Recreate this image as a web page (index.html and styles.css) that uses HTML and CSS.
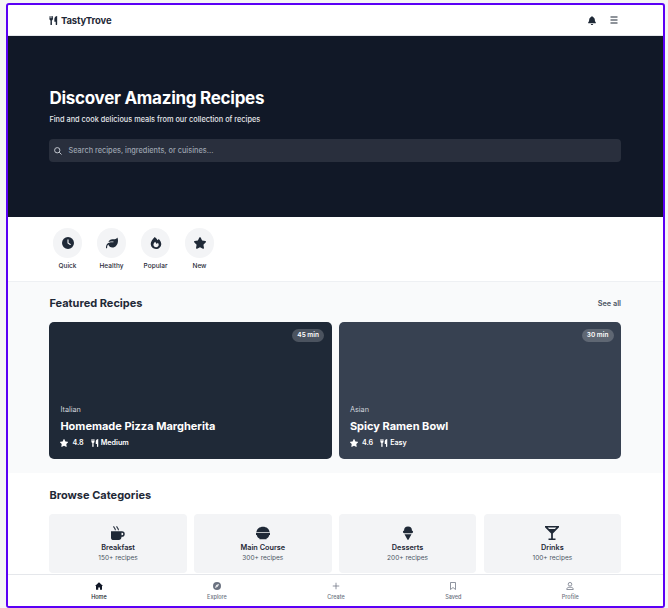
FILE: index.html
```html
<!DOCTYPE html>
<html lang="en">
<head>
<meta charset="utf-8">
<title>TastyTrove</title>
<link rel="stylesheet" href="styles.css">
</head>
<body>
<svg class="sprite" aria-hidden="true">
  <symbol id="utensils" viewBox="0 0 16 16"><path d="M1.200 0h1.100l.4 4h.6V0h1.200v4h.6l.4-4h1.100l.5 5c0 1.500-.8 2.500-2 2.900l.2 7.100c0 1.300-2.800 1.300-2.800 0L2.700 7.900C1.500 7.500.7 6.500.7 5zM14.500 0v15c0 1.300-2.600 1.300-2.600 0v-5H9.500V5.500C9.500 2.500 11.500 0 14.500 0z"/></symbol>
  <symbol id="star" viewBox="24 0 528 512"><path d="M316.900 18C311.600 7 300.400 0 288.100 0s-23.400 7-28.800 18L195 150.300 51.400 171.500c-12 1.800-22 10.200-25.700 21.700s-.7 24.200 7.900 32.700L137.800 329 113.200 474.700c-2 12 3 24.200 12.900 31.300s23 8 33.800 2.300l128.300-68.500 128.300 68.500c10.800 5.700 23.900 4.900 33.800-2.300s14.900-19.300 12.900-31.300L438.500 329 542.700 225.900c8.600-8.500 11.700-21.200 7.900-32.700s-13.700-19.900-25.700-21.700L381.200 150.300z"/></symbol>
</svg>
<div class="frame">
  <header class="header">
    <div class="brand"><svg class="i-brand"><use href="#utensils"/></svg><span>TastyTrove</span></div>
    <div class="actions">
      <svg class="i-bell" viewBox="0 0 448 512"><path d="M224 0c-17.700 0-32 14.300-32 32V51.200C119 66 64 130.600 64 208v18.800c0 47-17.300 92.400-48.500 127.600l-7.400 8.300c-8.400 9.400-10.400 22.900-5.300 34.400S19.400 416 32 416H416c12.600 0 24-7.400 29.200-18.900s3.100-25-5.300-34.400l-7.400-8.300C401.300 319.200 384 273.900 384 226.800V208c0-77.400-55-142-128-156.800V32c0-17.700-14.300-32-32-32zM160 448c0 36 28 64 64 64s64-28 64-64z"/></svg>
      <svg class="i-menu" viewBox="0 0 8 8"><path d="M.5 1h7M.5 4h7M.5 7h7"/></svg>
    </div>
  </header>
  <section class="hero">
    <h1>Discover Amazing Recipes</h1>
    <p>Find and cook delicious meals from our collection of recipes</p>
    <div class="search"><svg class="i-search" viewBox="0 0 16 16"><circle cx="6.500" cy="6.500" r="5.300"/><path d="M10.500 10.500 15 15"/></svg><span>Search recipes, ingredients, or cuisines...</span></div>
  </section>
  <section class="quick">
    <div class="quick-item"><div class="disc"><svg viewBox="0 0 512 512"><path fill-rule="evenodd" d="M256 0a256 256 0 1 1 0 512A256 256 0 1 1 256 0zM232 120V256c0 8 4 15.500 10.700 20l96 64c11 7.400 25.900 4.400 33.300-6.700s4.400-25.900-6.700-33.300L280 243.200V120c0-13.300-10.700-24-24-24s-24 10.700-24 24z"/></svg></div><span>Quick</span></div>
    <div class="quick-item"><div class="disc"><svg viewBox="0 0 512 512"><path d="M272 96c-78.600 0-145.100 51.500-167.700 122.500c33.600-17 71.500-26.500 111.700-26.500h88c8.800 0 16 7.200 16 16s-7.200 16-16 16H216c-16.600 0-32.700 1.900-48.300 5.400c-25.900 5.900-49.900 16.400-71.400 30.700C38.300 298.800 0 364.900 0 440v16c0 13.300 10.700 24 24 24s24-10.700 24-24V440c0-48.700 20.700-92.500 53.800-123.200C121.600 392.300 190.300 448 272 448l1 0c132.100-.7 239-130.900 239-291.400c0-42.600-7.500-83.100-21.100-119.600c-2.600-6.900-12.700-6.600-16.200-.1C455.900 72.100 418.700 96 376 96z"/></svg></div><span>Healthy</span></div>
    <div class="quick-item"><div class="disc"><svg viewBox="0 0 16 16"><path fill-rule="evenodd" d="M6.300 0C8 1.400 9.200 2.800 10.200 4.300l1.500-1.800C13.800 4.500 15 7 15 9.200 15 13 12 16 8 16s-7-3-7-6.900C1 6.300 3.200 2.800 6.300 0zM8.100 13.500c2 0 3.500-1.200 3.500-3.100 0-1-.5-1.900-1.100-2.700L9 9.400 6.800 6.300C5.500 7.800 4.600 9 4.600 10.400c0 1.900 1.500 3.100 3.500 3.100z"/></svg></div><span>Popular</span></div>
    <div class="quick-item"><div class="disc"><svg><use href="#star"/></svg></div><span>New</span></div>
  </section>
  <section class="featured">
    <div class="section-head"><h2>Featured Recipes</h2><a>See all</a></div>
    <div class="recipes">
      <article class="recipe navy">
        <span class="time">45 min</span>
        <div class="cuisine">Italian</div><h3>Homemade Pizza Margherita</h3>
        <div class="meta"><svg><use href="#star"/></svg><span class="rating">4.8</span><svg><use href="#utensils"/></svg><span>Medium</span></div>
      </article>
      <article class="recipe slate">
        <span class="time">30 min</span>
        <div class="cuisine">Asian</div><h3>Spicy Ramen Bowl</h3>
        <div class="meta"><svg><use href="#star"/></svg><span class="rating">4.6</span><svg><use href="#utensils"/></svg><span>Easy</span></div>
      </article>
    </div>
  </section>
  <section class="browse">
    <h2>Browse Categories</h2>
    <div class="categories">
      <div class="category"><svg viewBox="0 0 16 16"><path d="M0 6h12.500a3.200 3.200 0 0 1 0 6.400H12C12 14.500 11 16 9 16H3c-2 0-3-1-3-3zM12 7.700v3h.5a1.500 1.500 0 0 0 0-3z" fill-rule="evenodd"/><path class="steam" d="M3 .3c0 2 2 1.800 2 4.500M6.500 .3c0 2 2 1.800 2 4.500"/></svg><b>Breakfast</b><span>150+ recipes</span></div>
      <div class="category"><svg viewBox="0 0 16 16"><path d="M.5 6.800C.8 3.300 4 .8 8 .8s7.200 2.500 7.500 6zM0 7.700h16v2.500h-.8c-.5 2-1.500 3.200-3.200 4V15.200H4v-1c-1.700-.8-2.700-2-3.200-4H0z"/></svg><b>Main Course</b><span>300+ recipes</span></div>
      <div class="category"><svg viewBox="0 0 16 16"><path d="M3.500 5a4.500 4.500 0 0 1 9 0A1.700 1.700 0 0 1 12.500 8.300h-9A1.700 1.700 0 0 1 3.500 5zM4 9.300h8L8.700 15.500c-.3.600-1.100.6-1.400 0z"/></svg><b>Desserts</b><span>200+ recipes</span></div>
      <div class="category"><svg viewBox="0 0 16 16"><path fill-rule="evenodd" d="M0 0h16v1.500L9 8.700v5.600h3V16H4v-1.700h3V8.700L0 1.500zM3 1.700l1.700 1.800h6.600L13 1.700z"/></svg><b>Drinks</b><span>100+ recipes</span></div>
    </div>
  </section>
  <nav class="tabs">
    <div class="tab active"><svg viewBox="0 0 16 16"><path d="M8 .5 16 8h-2v7.500h-4v-4.500H6.500v4.500H2V8H0z"/></svg><span>Home</span></div>
    <div class="tab"><svg viewBox="0 0 16 16"><path fill-rule="evenodd" d="M8 0a8 8 0 1 1 0 16A8 8 0 0 1 8 0zM12 4 6.300 6.200 4 12l5.700-2.300zM8 7a1 1 0 1 1 0 2 1 1 0 0 1 0-2z"/></svg><span>Explore</span></div>
    <div class="tab"><svg class="line" viewBox="0 0 16 16"><path d="M8 1.500v13M1.500 8h13"/></svg><span>Create</span></div>
    <div class="tab"><svg class="line" viewBox="0 0 16 16"><path d="M3 1h10v14l-5-4-5 4z"/></svg><span>Saved</span></div>
    <div class="tab"><svg class="line" viewBox="0 0 16 16"><circle cx="8" cy="4.500" r="3.600"/><path d="M1.500 15c0-3 2-4.500 4.500-4.500h4c2.500 0 4.500 1.500 4.500 4.500z"/></svg><span>Profile</span></div>
  </nav>
</div>
</body>
</html>
```
FILE: styles.css
```css
* { box-sizing: border-box; }
body { margin: 0; padding: 3px 3px 0 6px; height: 608px; overflow: hidden; background: #f5f5f5; font-family: Inter, sans-serif; color: #1f2937; }
svg { display: block; fill: currentColor; flex: none; }
h1, h2, h3, p { margin: 0; }
.sprite { display: none; }
.frame { width: 659px; height: 605px; border: 2px solid #5b00f5; border-radius: 3px; background: #fff; display: flex; flex-direction: column; overflow: hidden; }
.header { height: 31px; flex: none; padding: 0 42px 0 41.400px; border-bottom: 1px solid #e5e7eb; display: flex; align-items: center; justify-content: space-between; }
.brand { display: flex; align-items: center; gap: 2.500px; font-size: 9.500px; font-weight: 700; letter-spacing: -.12px; }
.i-brand { width: 9px; height: 9px; }
.actions { display: flex; align-items: center; gap: 14px; padding-right: 3px; }
.i-bell { width: 8px; height: 9px; }
.i-menu { width: 8px; height: 8px; stroke: currentColor; stroke-width: 1.200; }
.hero { height: 181px; flex: none; background: #111827; padding: 51px 42px 0 41.400px; color: #fff; }
.hero h1 { font-size: 17px; line-height: 22px; font-weight: 700; letter-spacing: -.27px; }
.hero p { margin-top: 5px; font-size: 7.350px; line-height: 11px; font-weight: 500; color: #e5e7eb; }
.search { margin-top: 14px; height: 23px; border-radius: 4px; background: #292f3d; display: flex; align-items: center; gap: 6px; padding-left: 5px; font-size: 7.350px; font-weight: 500; color: #9ca3af; }
.i-search { width: 8px; height: 8px; fill: none; stroke: #c3c7cf; stroke-width: 2; }
.quick { height: 65px; flex: none; padding: 11px 41px 0; border-bottom: 1px solid #eef0f3; display: flex; gap: 7px; }
.quick-item { width: 37px; display: flex; flex-direction: column; align-items: center; gap: 3px; font-size: 6.500px; line-height: 10px; font-weight: 500; }
.disc { width: 29.500px; height: 29.500px; border-radius: 50%; background: #f3f4f6; display: grid; place-items: center; }
.disc svg { width: 12px; height: 12px; }
.featured { height: 191px; flex: none; padding: 14px 42px 0 41.400px; background: #f9fafb; }
.section-head { display: flex; justify-content: space-between; align-items: center; }
h2 { font-size: 11px; line-height: 15px; font-weight: 700; }
.section-head a { font-size: 7.300px; font-weight: 600; color: #4b5563; }
.recipes { margin-top: 11px; display: grid; grid-template-columns: 1fr 1fr; gap: 7.400px; }
.recipe { position: relative; height: 137px; border-radius: 5px; padding: 0 11px 11px; display: flex; flex-direction: column; justify-content: flex-end; color: #fff; }
.navy { background: #1f2937; }
.slate { background: #374151; }
.time { position: absolute; top: 7px; right: 7.400px; height: 13px; width: 32px; border-radius: 7px; background: rgba(255,255,255,.2); font-size: 6.500px; line-height: 13px; font-weight: 600; text-align: center; }
.cuisine { font-size: 7.300px; line-height: 11px; color: #d1d5db; }
h3 { margin-top: 4px; font-size: 11px; line-height: 14px; font-weight: 700; }
.meta { margin-top: 5px; display: flex; align-items: center; font-size: 7.200px; line-height: 10px; font-weight: 600; }
.meta svg { width: 8px; height: 8px; margin-right: 3px; }
.meta .rating + svg { margin-right: 2px; }
.rating { margin-left: 1px; margin-right: 7px; }
.browse { flex: 1; padding: 15px 42px 0 41.400px; min-height: 0; }
.categories { margin-top: 11px; display: grid; grid-template-columns: repeat(4, 1fr); gap: 7.400px; }
.category { height: 59px; border-radius: 4px; background: #f3f4f6; padding-top: 12px; display: flex; flex-direction: column; align-items: center; }
.category svg { width: 14px; height: 14px; }
.category b { margin-top: 3px; font-size: 7.300px; line-height: 10px; font-weight: 600; }
.category span { font-size: 6.500px; line-height: 10px; color: #4b5563; }
.steam { fill: none; stroke: currentColor; stroke-width: 1.200; }
.tabs { height: 32px; flex: none; border-top: 1px solid #e5e7eb; background: #fff; padding: 7px 34px 0 33px; display: flex; justify-content: space-around; }
.tab { display: flex; flex-direction: column; align-items: center; gap: 3px; font-size: 5.500px; line-height: 8px; font-weight: 500; color: #6b7280; }
.tab svg { width: 8px; height: 8px; }
.tab.active { color: #111827; }
.line { fill: none; stroke: currentColor; stroke-width: 1.500; }
```
